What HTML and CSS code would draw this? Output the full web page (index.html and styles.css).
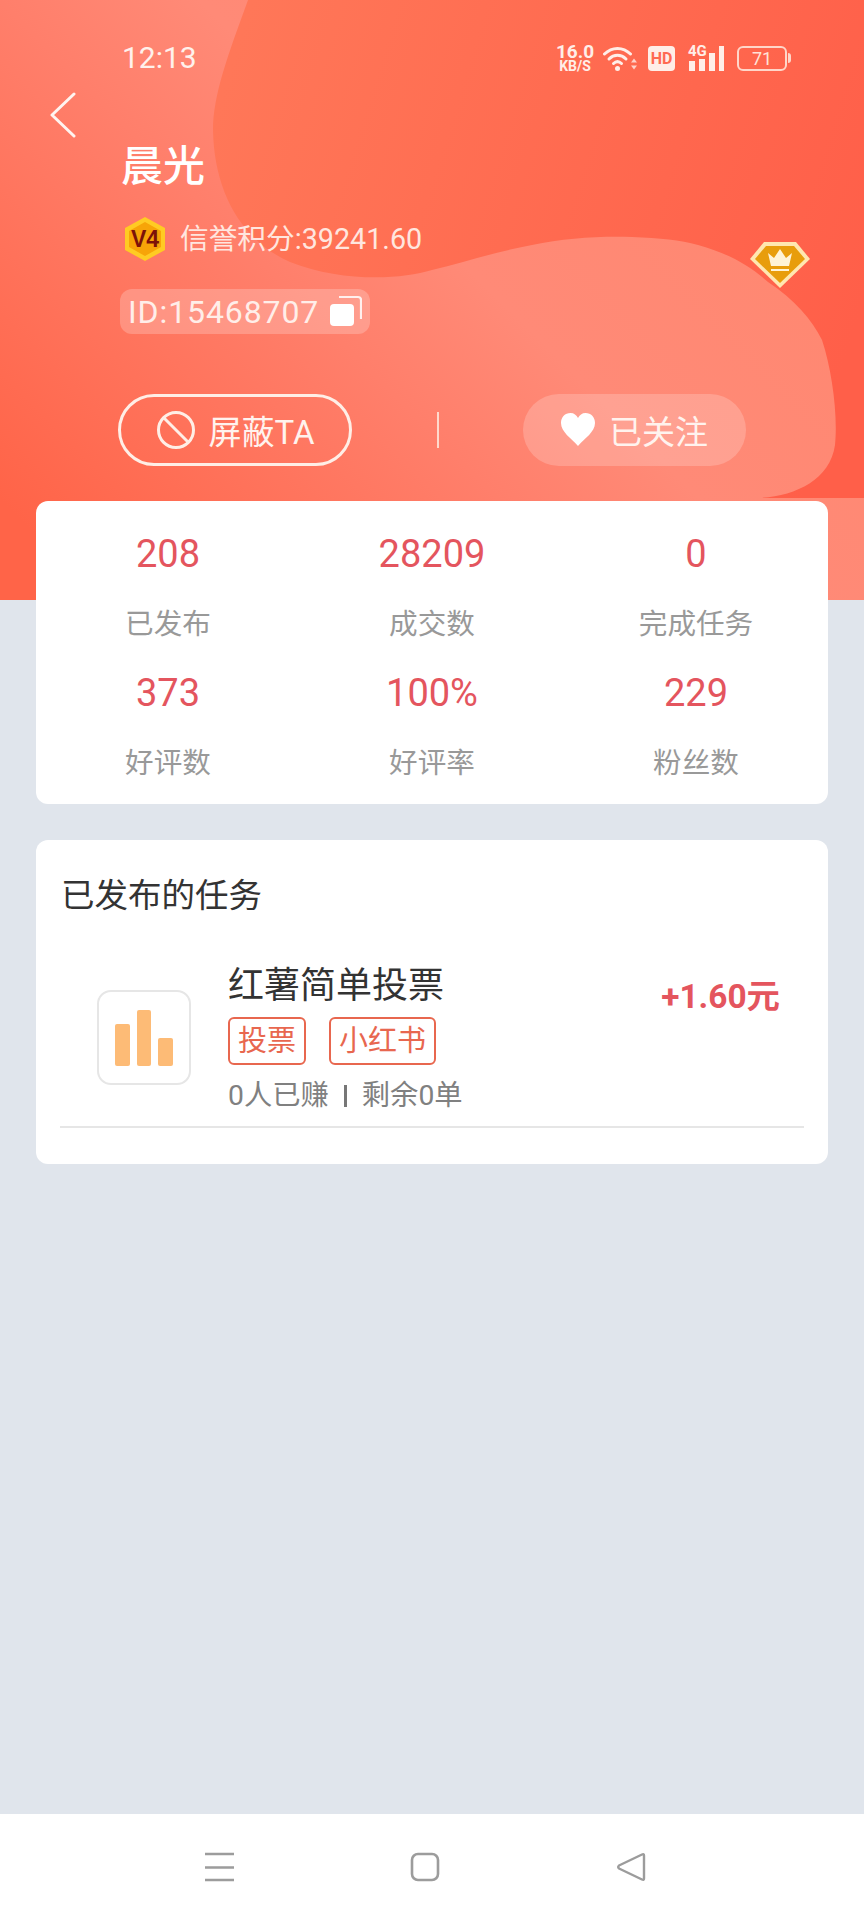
FILE: index.html
```html
<!DOCTYPE html>
<html lang="zh">
<head>
<meta charset="utf-8">
<title>晨光</title>
<link rel="stylesheet" href="styles.css">
</head>
<body>
<div class="page">
  <svg class="hero-bg" viewBox="0 0 864 600" preserveAspectRatio="none" aria-hidden="true">
    <defs>
      <linearGradient id="base" gradientUnits="userSpaceOnUse" x1="0" y1="500" x2="500" y2="0">
        <stop offset="0" stop-color="#ff6448"/>
        <stop offset="0.5" stop-color="#ff7f6b"/>
        <stop offset="0.7" stop-color="#ff8a77"/>
        <stop offset="1" stop-color="#ff8872"/>
      </linearGradient>
      <linearGradient id="dark" gradientUnits="userSpaceOnUse" x1="220" y1="100" x2="864" y2="300">
        <stop offset="0" stop-color="#ff7758"/>
        <stop offset="1" stop-color="#ff5f49"/>
      </linearGradient>
    </defs>
    <rect width="864" height="600" fill="url(#base)"/>
    <path fill="url(#dark)" d="M248 0C228 55 213 95 213 130C214 190 240 240 290 262C340 282 400 280 432 270C465 262 495 252 532 245C565 238 600 236 632 237C660 238 680 240 698 245C730 254 750 266 768 282C795 300 812 320 822 340C832 370 838 415 835 445C830 480 795 496 760 498L864 498L864 0Z"/>
  </svg>

  <header class="hero">
    <div class="status">
      <span class="time">12:13</span>
      <div class="status-icons">
        <div class="speed"><span class="speed-num">16.0</span><span class="speed-unit">KB/S</span></div>
        <svg class="wifi" viewBox="0 0 34 26" aria-hidden="true">
          <g fill="none" stroke="#ffeee8" stroke-width="3" stroke-linecap="round">
            <path d="M1.5 8.5C9 1 20 1 27.5 8.5"/>
            <path d="M6 13.5C11 8.5 18 8.5 23 13.5"/>
            <path d="M10.5 18C13 15.5 16 15.5 18.5 18"/>
          </g>
          <circle cx="14.5" cy="23" r="2.5" fill="#ffeee8"/>
          <path d="M31 13l3 4h-6zM28 20h6l-3 4z" fill="#ffeee8" opacity=".8"/>
        </svg>
        <span class="hd">HD</span>
        <div class="signal">
          <span class="signal-label">4G</span>
          <svg class="signal-bars" viewBox="0 0 36 25" aria-hidden="true">
            <path d="M1 15h6v10H1zM11 13h6v12h-6zM21 7h6v18h-6zM31 0h5v25h-5z" fill="#ffeee8"/>
          </svg>
        </div>
        <div class="battery"><span class="battery-body">71</span><span class="battery-tip"></span></div>
      </div>
    </div>

    <svg class="back" viewBox="0 0 30 46" aria-hidden="true">
      <path d="M26 2L4 23l22 21" fill="none" stroke="#fff4f0" stroke-width="3" stroke-linecap="round" stroke-linejoin="round"/>
    </svg>

    <h1 class="name">晨光</h1>

    <div class="credit">
      <svg class="level" viewBox="0 0 42 44" aria-hidden="true">
        <path d="M21 0L41 11V33L21 44L1 33V11Z" fill="#ffcb23"/>
        <path d="M21 5L37 14V30L21 39L5 30V14Z" fill="#f7a408"/>
        <text x="21" y="30" text-anchor="middle" class="level-text">V4</text>
      </svg>
      <span>信誉积分:39241.60</span>
    </div>

    <div class="id-pill">
      <span>ID:15468707</span>
      <svg class="copy" viewBox="0 0 32 32" aria-hidden="true">
        <path d="M9 2H28a3 3 0 0 1 3 3V24" fill="none" stroke="#fff" stroke-opacity=".85" stroke-width="2.200"/>
        <rect x="0" y="9" width="24" height="22" rx="4" fill="#fff"/>
      </svg>
    </div>

    <svg class="diamond" viewBox="0 0 60 46" aria-hidden="true">
      <path d="M14 0H46L60 17L30 46L0 17Z" fill="#ffe7b0"/>
      <path d="M16 4H44L55 17L30 41L5 17Z" fill="#e89d0c"/>
      <path d="M18 11L24 16L30 7L36 16L42 11L39 24H21Z" fill="#fff3d6"/>
      <path d="M21 27H39V29H21Z" fill="#fff3d6"/>
    </svg>

    <div class="actions">
      <button class="btn btn-block" type="button">
        <svg class="btn-icon" viewBox="0 0 40 40" aria-hidden="true">
          <circle cx="20" cy="20" r="17.5" fill="none" stroke="#ffeee6" stroke-width="3"/>
          <path d="M8 8L32 32" stroke="#ffeee6" stroke-width="3"/>
        </svg>
        屏蔽TA
      </button>
      <span class="vline"></span>
      <button class="btn btn-follow" type="button">
        <svg class="heart" viewBox="0 0 34 34" aria-hidden="true">
          <path d="M17 33C10 25 0 19 0 10C0 4 4 0 9.500 0C13 0 15.500 2 17 5C18.500 2 21 0 24.500 0C30 0 34 4 34 10C34 19 24 25 17 33Z" fill="#fff"/>
        </svg>
        已关注
      </button>
    </div>
  </header>

  <section class="stats">
    <div class="stat"><span class="stat-num">208</span><span class="stat-label">已发布</span></div>
    <div class="stat"><span class="stat-num">28209</span><span class="stat-label">成交数</span></div>
    <div class="stat"><span class="stat-num">0</span><span class="stat-label">完成任务</span></div>
    <div class="stat"><span class="stat-num">373</span><span class="stat-label">好评数</span></div>
    <div class="stat"><span class="stat-num">100%</span><span class="stat-label">好评率</span></div>
    <div class="stat"><span class="stat-num">229</span><span class="stat-label">粉丝数</span></div>
  </section>

  <section class="tasks">
    <h2 class="tasks-title">已发布的任务</h2>
    <article class="task">
      <div class="task-icon">
        <span class="bar bar-mid"></span>
        <span class="bar bar-tall"></span>
        <span class="bar bar-low"></span>
      </div>
      <div class="task-body">
        <div class="task-name">红薯简单投票</div>
        <div class="tags"><span class="tag">投票</span><span class="tag">小红书</span></div>
        <div class="task-meta"><span>0人已赚</span><span class="meta-sep"></span><span>剩余0单</span></div>
      </div>
      <div class="price">+1.60元</div>
    </article>
  </section>

  <nav class="navbar">
    <svg class="nav-icon" viewBox="0 0 30 30" aria-hidden="true">
      <path d="M1 2H30M1 15.500H30M1 28H30" stroke="#9c9c9c" stroke-width="2.400" fill="none"/>
    </svg>
    <svg class="nav-icon" viewBox="0 0 30 30" aria-hidden="true">
      <rect x="2" y="2" width="26" height="26" rx="6" fill="none" stroke="#9c9c9c" stroke-width="2.600"/>
    </svg>
    <svg class="nav-icon" viewBox="0 0 30 30" aria-hidden="true">
      <path d="M28 3.500V26.500Q28 28.500 26 27.500L3 16.500Q1.500 15 3 13.500L26 2.500Q28 1.500 28 3.500Z" fill="none" stroke="#9c9c9c" stroke-width="2.400" stroke-linejoin="round"/>
    </svg>
  </nav>
</div>
</body>
</html>
```

FILE: styles.css
```css
* {
  box-sizing: border-box;
}

html,
body {
  margin: 0;
  padding: 0;
}

body {
  font-family: Roboto, "Noto Sans CJK SC", sans-serif;
}

.page {
  position: relative;
  display: flex;
  flex-direction: column;
  width: 864px;
  height: 1920px;
  overflow: hidden;
  background: #e0e5ec;
}

.hero-bg {
  position: absolute;
  top: 0;
  left: 0;
  width: 864px;
  height: 600px;
}

.hero {
  position: relative;
  display: flex;
  flex-direction: column;
  align-items: flex-start;
  height: 501px;
  padding: 40px 0 0 118px;
  color: #fff;
}

/* status bar */
.status {
  display: flex;
  align-items: center;
  justify-content: space-between;
  width: 673px;
  height: 36px;
  padding-left: 4px;
}

.time {
  font-size: 30px;
  line-height: 36px;
  color: #fff1ec;
}

.status-icons {
  display: flex;
  align-items: center;
  height: 30px;
  color: #ffeee8;
}

.speed {
  display: flex;
  flex-direction: column;
  align-items: center;
  width: 38px;
  font-weight: 700;
}

.speed-num {
  font-size: 19px;
  line-height: 17px;
}

.speed-unit {
  font-size: 14px;
  line-height: 13px;
}

.wifi {
  width: 34px;
  height: 27px;
  margin-left: 9px;
}

.hd {
  width: 27px;
  height: 25px;
  margin-left: 11px;
  border-radius: 4px;
  background: #ffeee8;
  color: #ff6a52;
  font-size: 16px;
  font-weight: 700;
  line-height: 25px;
  text-align: center;
}

.signal {
  position: relative;
  width: 36px;
  height: 25px;
  margin-left: 13px;
}

.signal-label {
  position: absolute;
  top: -3px;
  left: 0;
  font-size: 15px;
  font-weight: 700;
  line-height: 16px;
}

.signal-bars {
  display: block;
  width: 36px;
  height: 25px;
}

.battery {
  display: flex;
  align-items: center;
  margin-left: 13px;
}

.battery-body {
  width: 50px;
  height: 25px;
  border: 2px solid #ffd6c9;
  border-radius: 6px;
  font-size: 18px;
  line-height: 21px;
  text-align: center;
  color: #ffe2d8;
}

.battery-tip {
  width: 3px;
  height: 10px;
  margin-left: 1px;
  border-radius: 0 3px 3px 0;
  background: #ffd6c9;
}

/* identity */
.back {
  width: 30px;
  height: 46px;
  margin: 16px 0 0 -70px;
}

.name {
  margin: 4px 0 0 3px;
  font-size: 42px;
  font-weight: 500;
  line-height: 50px;
  color: #fff;
}

.credit {
  display: flex;
  align-items: center;
  gap: 14px;
  height: 44px;
  margin: 25px 0 0 6px;
  font-size: 28.7px;
  line-height: 36px;
  color: #ffe6df;
}

.level {
  width: 42px;
  height: 44px;
}

.level-text {
  font-family: "Liberation Sans", sans-serif;
  font-size: 23px;
  font-weight: 700;
  fill: #7c1209;
}

.id-pill {
  display: flex;
  align-items: center;
  gap: 11px;
  width: 250px;
  height: 45px;
  margin: 28px 0 0 2px;
  padding: 2px 0 0 8px;
  border-radius: 12px;
  background: rgba(255, 255, 255, 0.22);
  font-size: 32px;
  letter-spacing: 0.9px;
  line-height: 43px;
  color: #ffeee9;
}

.copy {
  width: 32px;
  height: 32px;
  margin-top: -3px;
}

.diamond {
  position: absolute;
  top: 242px;
  left: 750px;
  width: 60px;
  height: 46px;
}

/* actions */
.actions {
  display: flex;
  align-items: center;
  margin-top: 60px;
}

.btn {
  display: flex;
  align-items: center;
  justify-content: center;
  height: 72px;
  border-radius: 36px;
  font-family: inherit;
  font-size: 33px;
  color: #fff3ee;
}

.btn-block {
  gap: 13px;
  width: 234px;
  padding: 0;
  border: 3px solid #ffeee6;
  background: transparent;
}

.btn-icon {
  width: 40px;
  height: 40px;
}

.btn-follow {
  gap: 14px;
  width: 223px;
  padding: 0;
  border: 0;
  background: rgba(255, 255, 255, 0.2);
}

.heart {
  width: 34px;
  height: 34px;
}

.vline {
  width: 2px;
  height: 36px;
  margin: 0 84px 0 85px;
  background: #ffd9cc;
}

/* stats */
.stats {
  position: relative;
  display: grid;
  grid-template-columns: repeat(3, 1fr);
  row-gap: 24px;
  width: 792px;
  height: 303px;
  margin-left: 36px;
  padding: 28px 0 21px;
  border-radius: 12px;
  background: #fff;
}

.stat {
  display: flex;
  flex-direction: column;
  align-items: center;
  gap: 25px;
}

.stat-num {
  font-size: 38px;
  line-height: 50px;
  color: #e4555e;
}

.stat-label {
  font-size: 28.6px;
  line-height: 40px;
  color: #999;
}

/* tasks */
.tasks {
  position: relative;
  width: 792px;
  height: 324px;
  margin: 36px 0 0 36px;
  padding: 34px 24px 0;
  border-radius: 12px;
  background: #fff;
}

.tasks-title {
  margin: 0 0 46px 1px;
  font-size: 33.5px;
  font-weight: 400;
  line-height: 44px;
  color: #333;
}

.task {
  display: flex;
  align-items: center;
  height: 164px;
  padding: 0 24px 13px 37px;
  border-bottom: 2px solid #e6e6e6;
}

.task-icon {
  display: flex;
  flex: none;
  align-items: flex-end;
  justify-content: center;
  gap: 7px;
  width: 94px;
  height: 95px;
  margin-top: -3px;
  padding-bottom: 17px;
  border: 2px solid #e6e6e6;
  border-radius: 14px;
}

.bar {
  width: 14.500px;
  border-radius: 2px;
  background: #fdbb76;
}

.bar-mid {
  height: 42px;
}

.bar-tall {
  height: 56px;
}

.bar-low {
  height: 28px;
}

.task-body {
  flex: 1;
  align-self: flex-start;
  margin-left: 37px;
}

.task-name {
  font-size: 36px;
  line-height: 44px;
  color: #333;
}

.tags {
  display: flex;
  gap: 23px;
  margin-top: 9px;
}

.tag {
  height: 48px;
  padding: 0 8px;
  border: 2px solid #e8674f;
  border-radius: 6px;
  font-size: 29px;
  line-height: 44px;
  color: #e8674f;
}

.task-meta {
  display: flex;
  align-items: center;
  margin-top: 13px;
  font-size: 28.3px;
  line-height: 36px;
  color: #808080;
}

.meta-sep {
  width: 3px;
  height: 22px;
  margin: 0 15px 0 15px;
  background: #777;
}

.price {
  align-self: flex-start;
  margin-top: 11px;
  font-size: 33.4px;
  font-weight: 700;
  line-height: 44px;
  color: #e4555e;
}

/* navigation bar */
.navbar {
  display: flex;
  align-items: center;
  justify-content: center;
  gap: 176px;
  height: 106px;
  margin-top: auto;
  padding: 0 14px 0 0;
  background: #fff;
}

.nav-icon {
  width: 30px;
  height: 30px;
}
```
